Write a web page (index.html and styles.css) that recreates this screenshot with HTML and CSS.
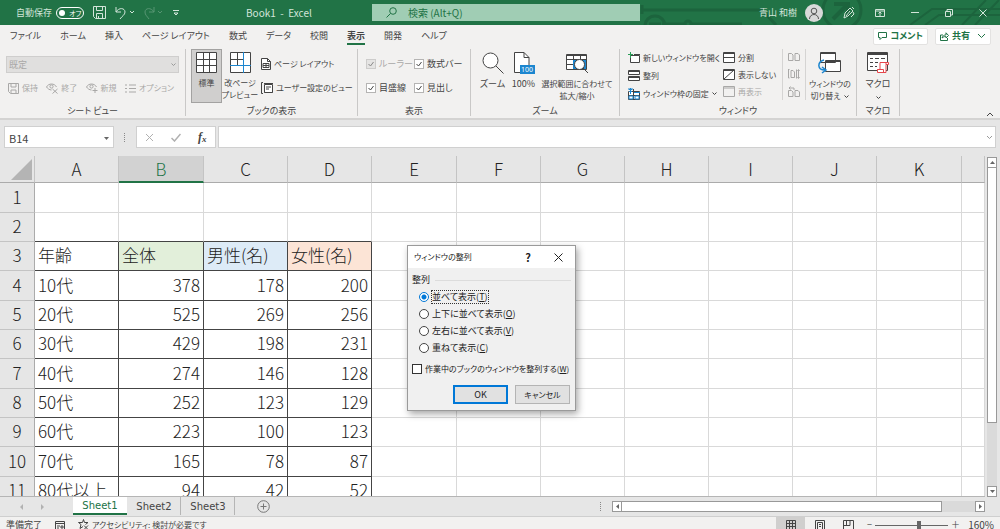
FILE: index.html
```html
<!DOCTYPE html>
<html lang="ja">
<head>
<meta charset="utf-8">
<title>Book1 - Excel</title>
<link rel="stylesheet" href="styles.css">
</head>
<body>
<div class="app">
<header class="titlebar">
  <svg class="circuit" width="400" height="25" viewBox="0 0 400 25" stroke-width="3">
    <path d="M42 10H162L176 25M42 5v9"/><circle cx="55" cy="26" r="10"/><path d="M49 24h12"/>
    <path d="M62 24h22M92 24h50"/><circle cx="88" cy="24" r="3"/>
    <circle cx="242" cy="10" r="19"/><path d="M233 19l15-15M234 4h14v14" stroke-width="4"/>
    <path d="M310 25l22-16h68M325 25l14-10h61M362 25l24-25M375 25l24-25" stroke-width="2"/>
  </svg>
  <div class="quick">
    <span>自動保存</span>
    <button class="switch" aria-label="自動保存 オフ"><i></i>オフ</button>
    <button class="tool" aria-label="上書き保存"><svg width="13" height="13" viewBox="0 0 13 13"><path d="M.5.5h12v12h-10l-2-2zM3.500.5v4h6v-4M3.500 12v-4.500h6V12M5.500 12v-2" /></svg></button>
    <button class="tool undo" aria-label="元に戻す"><svg width="20" height="14" viewBox="0 0 20 14"><path d="M1 1v5h5M1 6C4 1 10 2 10 6c0 3-3 4-5 7M15 5l2 2 2-2"/></svg></button>
    <button class="tool redo" aria-label="やり直し"><svg width="20" height="14" viewBox="0 0 20 14"><path d="M11 1v5H6M11 6C8 1 2 2 2 6c0 3 2 4 4 7M15 5l2 2 2-2"/></svg></button>
    <button class="tool more" aria-label="カスタマイズ"><svg width="6" height="6" viewBox="0 0 6 6"><path d="M0 .5h6M1 3l2 2 2-2z"/></svg></button>
  </div>
  <div class="doc">Book1&nbsp; -&nbsp; Excel</div>
  <label class="search"><svg width="11" height="11" viewBox="0 0 11 11"><circle cx="7" cy="4" r="3.300"/><path d="M4.500 6.500L.5 10.500"/></svg><input type="text" placeholder="検索 (Alt+Q)" aria-label="検索"></label>
  <div class="account">
    <span class="user">青山 和樹</span>
    <svg class="avatar" width="18" height="18" viewBox="0 0 18 18"><circle cx="9" cy="9" r="9" fill="#d9d9d9"/><circle cx="9" cy="7" r="2.800" fill="none" stroke="#555"/><path d="M4.500 15c0-6 9-6 9 0" fill="none" stroke="#555"/></svg>
    <button class="tool" aria-label="ペン"><svg width="12" height="13" viewBox="0 0 12 13"><path d="M1 12l1-5 5-5 3 3-5 5zM7 5L3 10M9 1l2 2M10 6l1 2-3 3"/></svg></button>
    <button class="tool" aria-label="リボン表示"><svg width="10" height="8" viewBox="0 0 10 8"><path d="M.5.5h9v7h-9zM.5 2h9M5 7V3M3.500 4.500L5 3l1.500 1.500"/></svg></button>
    <button class="tool" aria-label="最小化"><svg width="8" height="8" viewBox="0 0 8 8"><path d="M0 3.500h8"/></svg></button>
    <button class="tool" aria-label="元のサイズ"><svg width="8" height="8" viewBox="0 0 8 8"><path d="M.5 2.500h5v5h-5zM2 2V.5h5.500V6H6"/></svg></button>
    <button class="tool" aria-label="閉じる"><svg width="8" height="8" viewBox="0 0 8 8"><path d="M.5.5l7 7M7.500.5l-7 7"/></svg></button>
  </div>
</header>

<nav class="tabs">
  <button>ファイル</button><button>ホーム</button><button>挿入</button><button>ページ レイアウト</button><button>数式</button><button>データ</button><button>校閲</button><button class="on">表示</button><button>開発</button><button>ヘルプ</button>
  <div class="share">
    <button><svg width="9" height="9" viewBox="0 0 9 9"><path d="M.5.5h8v5H4l-2 2v-2H.5z"/></svg>コメント</button>
    <button><svg width="9" height="9" viewBox="0 0 9 9"><path d="M3 3H.5v5.500h7V6M2 6c1-3 3-3 4-3V.8L8.500 3.500 6 6V4.500C5 4.500 4 4.500 2 6z"/></svg>共有<svg class="chev" width="9" height="6" viewBox="0 0 9 6"><path d="M1 1l3.500 3.500L8 1"/></svg></button>
  </div>
</nav>

<section class="ribbon">
  <div class="group g-view">
    <div class="body">
      <select disabled aria-label="シート ビュー"><option>既定</option></select>
      <div class="viewbtns">
        <button disabled><svg width="11" height="11" viewBox="0 0 11 11"><path d="M.5.5h10v10h-8l-2-2zM3 .5v3.500h5V.5M3 10V7h5v3"/></svg>保持</button>
        <button disabled><svg width="12" height="11" viewBox="0 0 12 11"><path d="M.5 4c2-4 8-4 10 0M.5 4c1 1.500 3 3 5 3M6.500 6l5 4.500M11.500 6l-5 4.500"/><circle cx="5.500" cy="3.500" r="1.600"/></svg>終了</button>
        <button disabled><svg width="12" height="11" viewBox="0 0 12 11"><path d="M.5 4c2-4 8-4 10 0M.5 4c1 1.500 3 3 5 3M9 5v5M6.500 7.500h5"/><circle cx="5.500" cy="3.500" r="1.600"/></svg>新規</button>
        <button disabled><svg width="11" height="9" viewBox="0 0 11 9"><path d="M0 1h2M4 1h7M0 4.500h2M4 4.500h7M0 8h2M4 8h7"/></svg>オプション</button>
      </div>
    </div>
    <h2>シート ビュー</h2>
  </div>

  <div class="group g-book">
    <div class="body">
      <button class="big on"><svg width="21" height="21" viewBox="0 0 21 21"><path class="w" d="M.5.5h20v20H.5z"/><path d="M7.500 0v21M13.500 0v21M0 7.500h21M0 13.500h21"/></svg><span>標準</span></button>
      <button class="big"><svg width="21" height="21" viewBox="0 0 21 21"><path class="w" d="M.5.5h20v20H.5z"/><path d="M7.500 0v13M0 7.500h13"/><path class="b" d="M13.500 0v21M0 13.500h21"/></svg><span>改ページ<br>プレビュー</span></button>
      <div class="stack">
        <button><svg width="10" height="12" viewBox="0 0 10 12"><path class="w" d="M.5.5h6l3 3v8h-9z"/><path d="M6.500.5v3h3M2 5.500h6v4H2zM2 7.500h6M5 5.500v4"/></svg>ページ レイアウト</button>
        <button><svg width="12" height="12" viewBox="0 0 12 12"><path class="w" d="M3.500 2.500h8v8h-8z"/><path d="M3 1.500h9M2 .5H.5v11H2M5 5h5M5 7h3M3.500 10.500h8"/></svg>ユーザー設定のビュー</button>
      </div>
    </div>
    <h2>ブックの表示</h2>
  </div>

  <div class="group g-show">
    <div class="body">
      <label class="off"><input type="checkbox" checked disabled>ルーラー</label>
      <label><input type="checkbox" checked>数式バー</label>
      <label><input type="checkbox" checked>目盛線</label>
      <label><input type="checkbox" checked>見出し</label>
    </div>
    <h2>表示</h2>
  </div>

  <div class="group g-zoom">
    <div class="body">
      <button class="big"><svg width="22" height="22" viewBox="0 0 22 22"><circle class="w" cx="8.500" cy="8.500" r="7.500"/><path d="M14 14l7.500 7.500"/></svg><span>ズーム</span></button>
      <button class="big"><svg width="22" height="22" viewBox="0 0 22 22"><path class="w" d="M1.500.5H11l5 5v15H1.500z"/><path d="M11 .5v5h5"/><path class="badge" d="M7 13h15v9H7z"/><text x="8" y="20" class="num">100</text></svg><span>100%</span></button>
      <button class="big"><svg width="23" height="22" viewBox="0 0 23 22"><path class="w" d="M.5 2.500h20v15H.5z"/><path d="M7.500 2v15M14.500 2v5M0 7.500h21M0 12.500h8M0 3.500h21"/><path class="badge" d="M7 8h13v9H7z"/><circle class="w" cx="13.500" cy="12.500" r="5"/><path d="M17 16l5 5"/></svg><span>選択範囲に合わせて<br>拡大/縮小</span></button>
    </div>
    <h2>ズーム</h2>
  </div>

  <div class="group g-window">
    <div class="body">
      <div class="list">
        <button><svg width="12" height="12" viewBox="0 0 12 12"><path class="w" d="M2.500 3.500h9v7h-9z"/><path d="M6 2.500h6"/><path stroke="#2a9d57" d="M2.500 0v6M0 2.500h5"/></svg>新しいウィンドウを開く</button>
        <button><svg width="12" height="12" viewBox="0 0 12 12"><path class="w" d="M.5.5h11v4H.5zM.5 6.500h11v4H.5z"/><path d="M0 1.500h12M0 7.500h12"/></svg>整列</button>
        <button><svg width="12" height="12" viewBox="0 0 12 12"><path class="w" d="M.5 3.500h11v8H.5z"/><path d="M5.500 1v11M0 7.500h12"/><path class="b" d="M0 1h5M2.500 0v6M1 4l3-3M1 1l3 3M6 4.500h6M1 8h4v3H1zM7 8h4v3H7z"/></svg>ウィンドウ枠の固定<svg class="chev" width="5" height="4" viewBox="0 0 5 4"><path d="M.5.500l2 2 2-2"/></svg></button>
      </div>
      <div class="list">
        <button><svg width="12" height="12" viewBox="0 0 12 12"><path class="w" d="M.5.5h11v10H.5z"/><path d="M0 1.500h12M0 5.500h12"/></svg>分割</button>
        <button><svg width="12" height="12" viewBox="0 0 12 12"><path class="w" d="M.5.5h11v10H.5z"/><path d="M0 1.500h12M1 10L11 1"/></svg>表示しない</button>
        <button disabled><svg width="12" height="12" viewBox="0 0 12 12"><path d="M.5.5h11v10H.5zM0 2h12"/></svg>再表示</button>
      </div>
      <div class="mini">
        <svg width="12" height="10" viewBox="0 0 12 10"><path d="M.5 1.500h3l1.500 1.500v5.500H.5zM7 1.500h3l1.500 1.500v5.500H7z"/></svg>
        <svg width="12" height="10" viewBox="0 0 12 10"><path d="M1.500.5H0M.5 0v9h1M3 1.500h2l1.500 1.500v5.500H3zM8.500.500v9M10.500 1v8M9.500 2l1-1.500 1 1.500M9.500 8l1 1.500 1-1.500"/></svg>
        <svg width="12" height="11" viewBox="0 0 12 11"><path d="M.5 4.500h3l1.500 1.500v4.500H.5zM7 4.500h3l1.500 1.500v4.500H7zM1 2h5v2M2.500.5L1 2l1.500 1.500"/></svg>
      </div>
      <button class="big"><svg width="24" height="22" viewBox="0 0 24 22"><path class="w" d="M2.500.5h15v10h-15zM7.500 8.500h15v11h-15z"/><path d="M2 1.500h16M7 9.500h16"/><path class="b" stroke-width="1.500" d="M6 8C-1 10-1 18 7 18M4 15l4 3-4 3"/></svg><span>ウィンドウの<br>切り替え<svg class="chev" width="5" height="4" viewBox="0 0 5 4"><path d="M.5.500l2 2 2-2"/></svg></span></button>
    </div>
    <h2>ウィンドウ</h2>
  </div>

  <div class="group g-macro">
    <div class="body">
      <button class="big"><svg width="22" height="22" viewBox="0 0 22 22"><path class="w" d="M.5.5h20v18H.5z"/><path stroke-width="2" d="M0 2h21"/><path d="M3 6.500h3M8 6.500h4M14 6.500h4M3 10.500h3M8 10.500h3M3 14.500h3M8 14.500h2"/><path fill="#fff" stroke="#e5464b" d="M13 10.500h8.500v2H19v8h-8.500v-3H13zM19 12.500v-2M10.500 17.500h6v3"/></svg><span>マクロ</span><svg class="chev" width="5" height="4" viewBox="0 0 5 4"><path d="M.5.500l2 2 2-2"/></svg></button>
    </div>
    <h2>マクロ</h2>
  </div>
  <button class="collapse" aria-label="リボンを折りたたむ"><svg width="8" height="5" viewBox="0 0 8 5"><path d="M1 4l3-3 3 3"/></svg></button>
</section>

<section class="formula">
  <div class="namebox"><input type="text" value="B14" aria-label="名前ボックス"><svg width="5" height="3" viewBox="0 0 5 3"><path d="M0 0h5L2.500 3z"/></svg></div>
  <i class="dots"></i>
  <div class="fx">
    <button aria-label="キャンセル"><svg width="9" height="9" viewBox="0 0 9 9"><path d="M1 1l7 7M8 1L1 8"/></svg></button>
    <button aria-label="入力"><svg width="10" height="9" viewBox="0 0 10 9"><path stroke-width="1.500" d="M.5 5L3.500 8l6-7"/></svg></button>
    <button class="fn"><i>f</i><small>x</small></button>
  </div>
  <div class="entry"><input type="text" aria-label="数式バー"><svg width="7" height="5" viewBox="0 0 7 5"><path d="M1 1l2.500 2.500L6 1"/></svg></div>
</section>

<main class="work">
  <div class="sheet">
    <table>
      <colgroup><col class="c0"><col class="c"><col class="cw"><col class="c"><col class="c"><col class="cw"><col class="c"><col class="c"><col class="c"><col class="c"><col class="c"><col class="cw"><col></colgroup>
      <thead><tr><th class="corner"><svg width="21" height="21" viewBox="0 0 21 21"><path d="M21 0v21H0z"/></svg></th><th>A</th><th class="sel">B</th><th>C</th><th>D</th><th>E</th><th>F</th><th>G</th><th>H</th><th>I</th><th>J</th><th>K</th><th></th></tr></thead>
      <tbody>
        <tr><th>1</th><td></td><td></td><td></td><td></td><td></td><td></td><td></td><td></td><td></td><td></td><td></td><td></td></tr>
        <tr class="pre"><th>2</th><td></td><td></td><td></td><td></td><td></td><td></td><td></td><td></td><td></td><td></td><td></td><td></td></tr>
        <tr class="data names"><th>3</th><td>年齢</td><td class="all">全体</td><td class="men">男性(名)</td><td class="women">女性(名)</td><td></td><td></td><td></td><td></td><td></td><td></td><td></td><td></td></tr>
        <tr class="data"><th>4</th><td>10代</td><td>378</td><td>178</td><td>200</td><td></td><td></td><td></td><td></td><td></td><td></td><td></td><td></td></tr>
        <tr class="data"><th>5</th><td>20代</td><td>525</td><td>269</td><td>256</td><td></td><td></td><td></td><td></td><td></td><td></td><td></td><td></td></tr>
        <tr class="data"><th>6</th><td>30代</td><td>429</td><td>198</td><td>231</td><td></td><td></td><td></td><td></td><td></td><td></td><td></td><td></td></tr>
        <tr class="data"><th>7</th><td>40代</td><td>274</td><td>146</td><td>128</td><td></td><td></td><td></td><td></td><td></td><td></td><td></td><td></td></tr>
        <tr class="data"><th>8</th><td>50代</td><td>252</td><td>123</td><td>129</td><td></td><td></td><td></td><td></td><td></td><td></td><td></td><td></td></tr>
        <tr class="data"><th>9</th><td>60代</td><td>223</td><td>100</td><td>123</td><td></td><td></td><td></td><td></td><td></td><td></td><td></td><td></td></tr>
        <tr class="data"><th>10</th><td>70代</td><td>165</td><td>78</td><td>87</td><td></td><td></td><td></td><td></td><td></td><td></td><td></td><td></td></tr>
        <tr class="data"><th>11</th><td>80代以上</td><td>94</td><td>42</td><td>52</td><td></td><td></td><td></td><td></td><td></td><td></td><td></td><td></td></tr>
      </tbody>
    </table>
  </div>
  <div class="vscroll">
    <button aria-label="上へ"><svg width="5" height="3" viewBox="0 0 5 3"><path d="M0 3h5L2.500 0z"/></svg></button>
    <i class="thumb"></i><i class="track"></i>
    <button aria-label="下へ"><svg width="5" height="3" viewBox="0 0 5 3"><path d="M0 0h5L2.500 3z"/></svg></button>
  </div>
</main>

<section class="sheetbar">
  <div class="arrows"><svg width="3" height="6" viewBox="0 0 3 6"><path d="M3 0v6L0 3z"/></svg><svg width="3" height="6" viewBox="0 0 3 6"><path d="M0 0v6l3-3z"/></svg></div>
  <div class="sheets">
    <button class="on">Sheet1</button><button>Sheet2</button><button>Sheet3</button>
  </div>
  <button class="add" aria-label="新しいシート"><svg width="13" height="13" viewBox="0 0 13 13"><circle cx="6.500" cy="6.500" r="5.800"/><path d="M3.500 6.500h6M6.500 3.500v6"/></svg></button>
  <i class="dots"></i>
  <div class="hscroll">
    <button aria-label="左へ"><svg width="3" height="5" viewBox="0 0 3 5"><path d="M3 0v5L0 2.500z"/></svg></button>
    <i class="thumb"></i><i class="track"></i>
    <button aria-label="右へ"><svg width="3" height="5" viewBox="0 0 3 5"><path d="M0 0v5l3-2.500z"/></svg></button>
  </div>
</section>

<footer class="status">
  <span>準備完了</span>
  <svg width="10" height="10" viewBox="0 0 10 10"><path d="M.5 1.500h9v8h-9zM0 3.500h10M2 6h3M2 8h2M6 6h2v2H6z"/></svg>
  <span class="acc"><svg width="11" height="11" viewBox="0 0 11 11"><path d="M5.500.5l1 3H10L7.500 5.500M5.500.5l-1 3H.5L3 5.500 2 9.500l3-2M6 6.500l4 4M10 6.500l-4 4"/></svg>アクセシビリティ: 検討が必要です</span>
  <div class="views">
    <button class="on" aria-label="標準"><svg width="10" height="10" viewBox="0 0 10 10"><path d="M.5.5h9v9h-9zM3.500 0v10M6.500 0v10M0 3.500h10M0 6.500h10"/></svg></button>
    <button aria-label="ページ レイアウト"><svg width="10" height="10" viewBox="0 0 10 10"><path d="M.5.5h9v9h-9zM2.500 2.500h5v7h-5zM4 4.500h2M4 6.500h2"/></svg></button>
    <button aria-label="改ページ プレビュー"><svg width="11" height="10" viewBox="0 0 11 10"><path d="M.5 9.500v-9h10v9M3.500 0v5.500M7 0v5.500H1"/></svg></button>
  </div>
  <div class="zoom"><span>−</span><input type="range" min="0" max="100" value="60" aria-label="ズーム"><span>＋</span><output>160%</output></div>
</footer>
</div>

<form class="dialog" role="dialog" aria-labelledby="dlg-title">
  <div class="head"><strong id="dlg-title">ウィンドウの整列</strong><button type="button" class="help">?</button><button type="button" aria-label="閉じる"><svg width="9" height="9" viewBox="0 0 9 9"><path d="M.5.5l8 8M8.500.5l-8 8"/></svg></button></div>
  <fieldset>
    <legend>整列</legend>
    <label class="focus"><input type="radio" name="arr" checked><span>並べて表示(<u>T</u>)</span></label>
    <label><input type="radio" name="arr"><span>上下に並べて表示(<u>O</u>)</span></label>
    <label><input type="radio" name="arr"><span>左右に並べて表示(<u>V</u>)</span></label>
    <label><input type="radio" name="arr"><span>重ねて表示(<u>C</u>)</span></label>
  </fieldset>
  <label class="only"><input type="checkbox"><span>作業中のブックのウィンドウを整列する(<u>W</u>)</span></label>
  <div class="actions"><button type="button" class="ok">OK</button><button type="button">キャンセル</button></div>
</form>
</body>
</html>
```

FILE: styles.css
```css
* { box-sizing: border-box; }
body {
  margin: 0;
  font: 9px/12px "Noto Sans CJK JP", "Noto Sans", sans-serif;
  font-feature-settings: "palt";
  color: #444;
}
button, input, select {
  font: inherit;
  font-feature-settings: inherit;
  color: inherit;
  margin: 0;
  padding: 0;
  border: 0;
  background: none;
}
button { display: flex; align-items: center; white-space: nowrap; }
svg { flex: none; display: block; fill: none; stroke: currentColor; }
.app { display: flex; flex-direction: column; height: 100vh; overflow: hidden; background: #e6e6e6; }

/* title bar */
.titlebar {
  position: relative;
  display: flex;
  align-items: center;
  height: 25px;
  flex: none;
  background: #217346;
  color: #d3e5da;
}
.circuit { position: absolute; right: 0; top: 0; width: 400px; color: #1c643d; }
.quick { display: flex; align-items: center; width: 246px; padding-left: 16px; }
.switch {
  width: 28px; height: 12px;
  margin: 0 9px 0 4px;
  padding-left: 2px;
  gap: 4px;
  border: 1px solid #fff;
  border-radius: 6px;
  color: #fff;
  font-size: 7px;
  line-height: 10px;
}
.switch i { width: 6px; height: 6px; border-radius: 50%; background: #fff; }
.undo { margin-left: 9px; }
.redo { margin-left: 8px; opacity: .3; }
.more { margin-left: 10px; }
.doc { flex: 1 1 0; font-size: 10px; }
.search {
  display: flex;
  align-items: center;
  gap: 11px;
  flex: 0 1 268px;
  height: 17px;
  padding-left: 14px;
  background: #a0cdb4;
  color: #217346;
  position: relative;
}
.search input { flex: 1; min-width: 0; font-size: 10px; }
.search input::placeholder { color: #217346; opacity: 1; }
.account { position: relative; flex: 0 0 360px; display: flex; align-items: center; justify-content: flex-end; padding-right: 13px; gap: 26px; }
.user { margin-right: -18px; }
.avatar { stroke: none; margin-right: -6px; }
.account .avatar + button { margin-right: -6px; }

/* ribbon tabs */
.tabs { display: flex; flex: none; height: 22px; padding: 0 9px 0 10px; gap: 19px; background: #f2f1f0; }
.tabs > .on { font-weight: 700; box-shadow: inset 0 -2px #f2f1f0, inset 0 -4px #217346; }
.share { margin-left: auto; display: flex; gap: 7px; align-items: center; color: #217346; font-weight: 700; }
.share button { gap: 3px; height: 17px; padding: 0 4px; background: #fff; border: 1px solid #e3e2e1; border-radius: 2px; }
.chev { display: inline-block; vertical-align: middle; margin-left: 4px; }
.list .chev { margin-left: 0; }

/* ribbon */
.ribbon { display: flex; flex: none; height: 73px; padding-top: 2px; background: #f2f1f0; border-bottom: 2px solid #d4d3d2; }
.group { display: flex; flex-direction: column; border-right: 1px solid #c9c8c7; height: 67px; flex: none; }
.group h2 { margin: auto 0 0; font: inherit; text-align: center; line-height: 10px; }
.group .body { display: flex; height: 54px; }
.w { fill: #fff; }
.b { fill: none; stroke: #1c86cf; }
.badge { fill: #1c86cf; stroke: none; }
.num { font: 7px "Noto Sans", sans-serif; fill: #fff; stroke: none; }
.big { flex-direction: column; gap: 4px; padding-top: 3px; text-align: center; line-height: 12px; }
.big.on { background: #d0cfce; border: 1px solid #a3a2a1; padding-top: 2px; }
.stack, .list, .mini { display: flex; flex-direction: column; }
.stack, .list, .viewbtns { font-size: 8px; }
.stack button { height: 24px; gap: 3px; }
.list button { height: 18px; gap: 3px; }
button:disabled, .off { color: #a9a8a7; }

.g-view { width: 186px; }
.g-view .body { flex-direction: column; padding: 7px 6px 0; }
.g-view select { appearance: none; height: 17px; width: 100%; padding-left: 2px; border: 1px solid #cfcecd; background: #e0dfde url("data:image/svg+xml,%3Csvg xmlns='http://www.w3.org/2000/svg' width='5' height='4'%3E%3Cpath d='M.5.5l2 2 2-2' fill='none' stroke='%23999'/%3E%3C/svg%3E") no-repeat right 2px center; color: #a9a8a7; opacity: 1; }
.viewbtns { display: flex; justify-content: space-between; padding: 9px 5px 0 2px; }
.viewbtns button { gap: 3px; }
.g-book { width: 172px; }
.g-book .body { padding-left: 5px; }
.g-book .big { width: 31px; font-size: 8px; }
.g-book .big + .big { width: 36px; }
.g-book .stack { padding: 3px 0 0 3px; }
.g-show { width: 113px; }
.g-show .body { display: grid; grid-template-columns: 48px 1fr; grid-auto-rows: 24px; padding: 3px 0 0 8px; }
.g-show label { display: flex; align-items: center; gap: 3px; }
input[type="checkbox"] { appearance: none; flex: none; width: 10px; height: 10px; background: #fff; border: 1px solid #b5b4b3; }
input[type="checkbox"]:checked { background: #fff url("data:image/svg+xml,%3Csvg xmlns='http://www.w3.org/2000/svg' width='8' height='8'%3E%3Cpath d='M1.5 4l2 2 3-4' fill='none' stroke='%23444'/%3E%3C/svg%3E") no-repeat center; }
input[type="checkbox"]:disabled { background-color: #dddcdb; opacity: .6; }
.g-zoom { width: 149px; }
.g-zoom .body { padding-left: 7px; }
.g-zoom .big { width: 29px; }
.g-zoom .big + .big { width: 33px; }
.g-zoom .big:last-child { width: 74px; font-size: 8px; }
.g-window { width: 237px; }
.g-window .body { padding-left: 8px; }
.g-window .list { width: 95px; }
.g-window .list + .list { width: 60px; border-right: 1px solid #d5d4d3; height: 51px; }
.mini { justify-content: space-around; padding: 0 5px; border-right: 1px solid #d5d4d3; color: #a9a8a7; height: 51px; }
.g-window .big { width: 48px; font-size: 8px; }
.g-macro { width: 43px; }
.g-macro .big { width: 42px; }
.g-macro .big .chev { margin: 2px 0 0; }
.collapse { margin: auto 6px 1px auto; }

/* formula bar */
.formula { display: flex; flex: none; height: 36px; padding: 6px 4px 8px; align-items: stretch; }
.namebox, .fx, .entry { display: flex; align-items: center; background: #fff; border: 1px solid #d0d0d0; }
.namebox { width: 110px; padding: 2px 4px 0; }
.namebox input { flex: 1; min-width: 0; font-size: 11px; }
.namebox svg, .corner svg, .vscroll svg, .hscroll svg, .arrows svg { fill: #666; stroke: none; }
.dots { width: 1px; height: 9px; margin: auto 11px auto 10px; border-left: 1px dotted #888; }
.fx { width: 80px; justify-content: space-around; color: #b0b0b0; margin-right: 2px; }
.fx .fn { color: #444; font: italic 700 12px/12px "Liberation Serif", serif; }
.fn small { font-size: 9px; padding-top: 3px; }
.entry { flex: 1; padding-right: 2px; color: #999; }
.entry input { flex: 1; }

/* worksheet */
.work { display: flex; flex: 1; min-height: 0; }
.sheet { flex: 1; min-width: 0; overflow: hidden; border-bottom: 1px solid #b5b5b5; }
.sheet table { table-layout: fixed; width: 100%; border-collapse: separate; border-spacing: 0; font-size: 17px; line-height: 24px; font-weight: 300; font-feature-settings: normal; color: #222; }
.c0 { width: 35px; }
.c { width: 84px; }
.cw { width: 85px; }
.sheet th { padding: 0; font-weight: 300; background: #e6e6e6; border-right: 1px solid #c4c4c4; }
.sheet thead th { height: 27px; border-bottom: 1px solid #ababab; }
.sheet thead .sel { background: #d2d2d2; color: #217346; border-bottom: 2px solid #217346; }
.sheet .corner { padding: 3px 2px 2px 11px; }
.corner svg { fill: #b4b4b4; }
.sheet tbody tr { height: 29px; }
.sheet tbody tr:nth-child(3n+1) { height: 30px; }
.sheet tbody th { padding-bottom: 2px; border-bottom: 1px solid #c4c4c4; border-right-color: #ababab; }
.sheet td { padding: 0 3px 2px; background: #fff; border-right: 1px solid #d9d9d9; border-bottom: 1px solid #d9d9d9; text-align: right; white-space: nowrap; }
.sheet td:nth-child(2), .names td { text-align: left; }
.pre td:nth-child(-n+5), .data td:nth-child(-n+5) { border-bottom-color: #444; }
.data td:nth-child(-n+5) { border-right-color: #444; }
.names .all { background: #e2efda; }
.names .men { background: #ddebf7; }
.names .women { background: #fce4d6; }

.vscroll { flex: none; width: 15px; padding: 1px 3px 0 2px; display: flex; flex-direction: column; }
.vscroll button, .hscroll button { width: 10px; height: 11px; flex: none; justify-content: center; background: #fff; border: 1px solid #999; }
.vscroll .thumb { flex: 256; background: #fff; border: 1px solid #999; border-top: 0; }
.vscroll .track { flex: 64; background: #dadada; }

/* sheet tabs */
.sheetbar { display: flex; flex: none; height: 20px; padding-right: 15px; border-bottom: 1px solid #cfcfcf; }
.arrows { display: flex; align-items: center; gap: 18px; width: 73px; padding-left: 20px; opacity: .4; }
.sheets { display: flex; font: 10px/12px "DejaVu Sans", sans-serif; }
.sheets button { width: 54px; height: 18px; padding-top: 2px; justify-content: center; }
.sheets .on { background: #fff; color: #217346; border-bottom: 2px solid #217346; }
.sheets button + button { box-shadow: inset -1px 0 #b5b5b5; }
.add { margin-left: 22px; color: #777; }
.sheetbar .dots { margin-left: auto; }
.hscroll { display: flex; align-items: center; flex: 0 0 373px; }
.hscroll .thumb { flex: 319; height: 11px; background: #fff; border: 1px solid #999; border-left: 0; }
.hscroll .track { flex: 33; height: 11px; background: #dadada; }

/* status bar */
.status { display: flex; flex: none; height: 12px; padding: 2px 6px 0; overflow: hidden; background: #f2f1f0; }
.status > svg { margin: 1px 13px 0; }
.acc { display: flex; gap: 3px; font-size: 8px; }
.views { margin-left: auto; display: flex; margin-top: -2px; }
.views button { width: 29px; justify-content: center; align-items: flex-start; padding-top: 3px; }
.views .on { background: #d0cfce; }
.zoom { display: flex; margin-left: 4px; }
.zoom input { appearance: none; width: 73px; height: 12px; margin: 0 3px; background: linear-gradient(#666, #666) no-repeat center / 100% 1px; }
.zoom input::-webkit-slider-thumb { appearance: none; width: 4px; height: 9px; background: #666; }
.zoom output { margin-left: 8px; font-size: 10px; }

/* dialog */
.dialog {
  position: absolute; left: 407px; top: 245px; width: 169px;
  padding-bottom: 6px;
  background: #f0f0f0;
  border: 1px solid #9a9a9a;
  box-shadow: 2px 3px 7px rgba(0, 0, 0, .35);
  color: #222;
}
.head { display: flex; align-items: center; height: 22px; padding: 0 12px 0 6px; background: #fff; font-size: 8px; }
.head strong { flex: 1; font-weight: 400; }
.help { margin-right: 23px; font-size: 11px; font-weight: 700; }
.dialog fieldset { margin: 6px 4px 0; padding: 0; border: 0; }
.dialog legend { display: flex; align-items: center; gap: 5px; width: 100%; padding: 0; margin-bottom: 2px; }
.dialog legend::after { content: ""; flex: 1; border-top: 1px solid #dcdcdc; }
.dialog label { display: flex; align-items: center; gap: 2px; height: 17px; padding-left: 7px; white-space: nowrap; }
.dialog label span { border: 1px dotted transparent; }
.dialog .focus span { border-color: #333; }
.dialog input[type="radio"] { appearance: none; flex: none; width: 10px; height: 10px; border: 1px solid #444; border-radius: 50%; background: #fff; }
.dialog input[type="radio"]:checked { border-color: #0078d7; background: radial-gradient(#0078d7 0 2px, #fff 3px); }
.dialog .only { height: 20px; margin: 3px 4px 0; padding: 0; font-size: 8px; }
.dialog .only input { border-color: #333; }
.actions { display: flex; justify-content: flex-end; gap: 7px; padding: 6px 5px 0; }
.actions button { width: 55px; height: 19px; justify-content: center; background: #e1e1e1; border: 1px solid #b4b4b4; font-size: 8px; }
.actions .ok { border: 2px solid #0078d7; font-size: 9px; }
```
